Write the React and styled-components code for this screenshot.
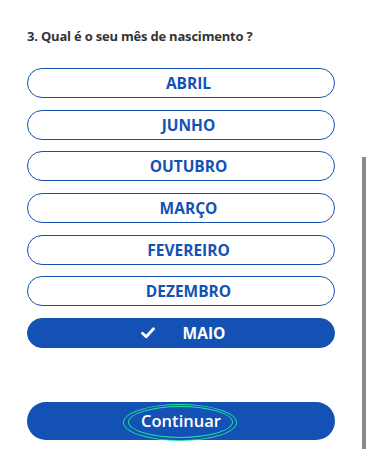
import React, { useState } from "react";
import styled, { createGlobalStyle } from "styled-components";

const GlobalStyle = createGlobalStyle`
  html, body { margin: 0; padding: 0; background: #ffffff; }
  body { font-family: "Open Sans", "Noto Sans", sans-serif; overflow: hidden; }
  * { box-sizing: border-box; }
`;

const BLUE = "#1351b4";

const Page = styled.div`
  position: relative;
  width: 370px;
  height: 449px;
  overflow: hidden;
  padding: 26px 35px 0 27px;
`;

const Question = styled.h2`
  margin: 0;
  font-family: "Open Sans", sans-serif;
  font-size: 13px;
  font-weight: 700;
  color: #333333;
  letter-spacing: -0.2px;
  line-height: 20px;
`;

const Options = styled.div`
  display: flex;
  flex-direction: column;
  gap: 11.7px;
  margin-top: 22px;
`;

const Option = styled.button`
  display: flex;
  align-items: center;
  justify-content: center;
  gap: 28px;
  height: 30px;
  width: 100%;
  border-radius: 15px;
  border: 1px solid ${BLUE};
  background: ${(p) => (p.$selected ? BLUE : "#ffffff")};
  color: ${(p) => (p.$selected ? "#ffffff" : BLUE)};
  font-family: "Open Sans", sans-serif;
  font-size: 15.5px;
  font-weight: 700;
  text-transform: uppercase;
  padding: 0 0 0 ${(p) => (p.$selected ? "4px" : "15px")};
  cursor: pointer;
`;

const Check = styled.svg`
  width: 14px;
  height: 12px;
  flex: none;
`;

const Primary = styled.button`
  display: flex;
  align-items: center;
  justify-content: center;
  width: 100%;
  height: 38px;
  margin-top: 54px;
  border: none;
  border-radius: 19px;
  background: ${BLUE};
  color: #ffffff;
  font-family: "Open Sans", sans-serif;
  font-size: 16.5px;
  font-weight: 600;
  padding: 0;
`;

const FocusLabel = styled.span`
  position: relative;
  line-height: 24px;
  &::before,
  &::after {
    content: "";
    position: absolute;
    border-radius: 50%;
    pointer-events: none;
  }
  &::before {
    left: -18px;
    right: -16px;
    top: -5px;
    bottom: -8px;
    border: 1.5px solid #1fe0a0;
  }
  &::after {
    left: -13px;
    right: -12px;
    top: -3px;
    bottom: -5px;
    border: 1.5px solid #1fe0a0;
  }
`;

const Footnote = styled.p`
  margin: 6px 0 0;
  font-size: 13px;
  line-height: 16px;
  color: #b8b8b8;
  white-space: nowrap;
`;

const Scrollbar = styled.div`
  position: absolute;
  left: 362px;
  top: 157px;
  width: 3.5px;
  bottom: 0;
  background: #8a8a8a;
`;

const MONTHS = ["ABRIL", "JUNHO", "OUTUBRO", "MARÇO", "FEVEREIRO", "DEZEMBRO", "MAIO"];

export default function App() {
  const [selected, setSelected] = useState("MAIO");
  return (
    <>
      <GlobalStyle />
      <Page>
        <Question>3. Qual é o seu mês de nascimento ?</Question>
        <Options>
          {MONTHS.map((m) => (
            <Option key={m} $selected={selected === m} onClick={() => setSelected(m)}>
              {selected === m && (
                <Check viewBox="0 0 14 12">
                  <path d="M1.5 6.2 L5.2 9.8 L12.5 1.8" fill="none" stroke="#ffffff" strokeWidth="2.8" strokeLinecap="round" strokeLinejoin="round" />
                </Check>
              )}
              <span>{m}</span>
            </Option>
          ))}
        </Options>
        <Primary>
          <FocusLabel>Continuar</FocusLabel>
        </Primary>
        <Footnote>Esta resposta não poderá ser alterada depois.</Footnote>
        <Scrollbar />
      </Page>
    </>
  );
}
